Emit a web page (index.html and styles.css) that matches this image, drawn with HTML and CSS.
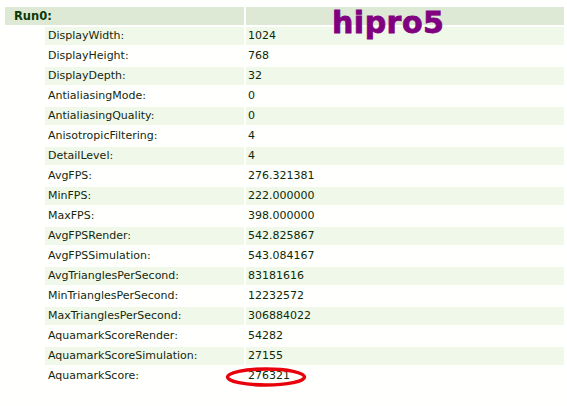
FILE: index.html
```html
<!DOCTYPE html>
<html>
<head>
<meta charset="utf-8">
<link rel="stylesheet" href="styles.css">
</head>
<body>
<div class="results">
  <div class="head-label">Run0:</div>
  <div class="head-value"></div>

  <div class="indent"></div><div class="label odd">DisplayWidth:</div><div class="value odd">1024</div>
  <div class="indent"></div><div class="label">DisplayHeight:</div><div class="value">768</div>
  <div class="indent"></div><div class="label odd">DisplayDepth:</div><div class="value odd">32</div>
  <div class="indent"></div><div class="label">AntialiasingMode:</div><div class="value">0</div>
  <div class="indent"></div><div class="label odd">AntialiasingQuality:</div><div class="value odd">0</div>
  <div class="indent"></div><div class="label">AnisotropicFiltering:</div><div class="value">4</div>
  <div class="indent"></div><div class="label odd">DetailLevel:</div><div class="value odd">4</div>
  <div class="indent"></div><div class="label">AvgFPS:</div><div class="value">276.321381</div>
  <div class="indent"></div><div class="label odd">MinFPS:</div><div class="value odd">222.000000</div>
  <div class="indent"></div><div class="label">MaxFPS:</div><div class="value">398.000000</div>
  <div class="indent"></div><div class="label odd">AvgFPSRender:</div><div class="value odd">542.825867</div>
  <div class="indent"></div><div class="label">AvgFPSSimulation:</div><div class="value">543.084167</div>
  <div class="indent"></div><div class="label odd">AvgTrianglesPerSecond:</div><div class="value odd">83181616</div>
  <div class="indent"></div><div class="label">MinTrianglesPerSecond:</div><div class="value">12232572</div>
  <div class="indent"></div><div class="label odd">MaxTrianglesPerSecond:</div><div class="value odd">306884022</div>
  <div class="indent"></div><div class="label">AquamarkScoreRender:</div><div class="value">54282</div>
  <div class="indent"></div><div class="label odd">AquamarkScoreSimulation:</div><div class="value odd">27155</div>
  <div class="indent"></div><div class="label">AquamarkScore:</div><div class="value">276321</div>
</div>
<div class="watermark">hipro5</div>
<svg class="circle" width="86" height="24" viewBox="0 0 86 24">
  <ellipse cx="43" cy="12" rx="38.5" ry="8" fill="none" stroke="#e8000a" stroke-width="3.5"/>
</svg>
</body>
</html>
```

FILE: styles.css
```css
html, body {
  margin: 0;
  padding: 0;
  background: #fffffe;
}
body {
  position: relative;
  width: 567px;
  height: 406px;
  overflow: hidden;
  font-family: "DejaVu Sans", Verdana, sans-serif;
  font-size: 11px;
}
.results {
  margin: 7px 0 0 5px;
  width: 559px;
  display: grid;
  grid-template-columns: 38px 199px 318px;
  column-gap: 2px;
  row-gap: 2px;
  grid-auto-rows: 18px;
}
.head-label {
  grid-column: 1 / span 2;
  background: #dde9d4;
  color: #0b3a06;
  font-weight: bold;
  font-size: 11.5px;
  line-height: 18px;
  padding-left: 9px;
}
.head-value {
  background: #dde9d4;
}
.label, .value {
  line-height: 18px;
  white-space: nowrap;
}
.label {
  padding-left: 3px;
  color: #14280e;
}
.value {
  padding-left: 2px;
  color: #0c2a08;
}
.odd {
  background: #f0f8ea;
}
.watermark {
  position: absolute;
  left: 332px;
  top: 8px;
  font-family: "DejaVu Sans", sans-serif;
  font-weight: bold;
  font-size: 30px;
  line-height: 30px;
  letter-spacing: 0.5px;
  color: #800080;
  -webkit-text-stroke: 0.8px #800080;
}
.circle {
  position: absolute;
  left: 223px;
  top: 365px;
}
```
